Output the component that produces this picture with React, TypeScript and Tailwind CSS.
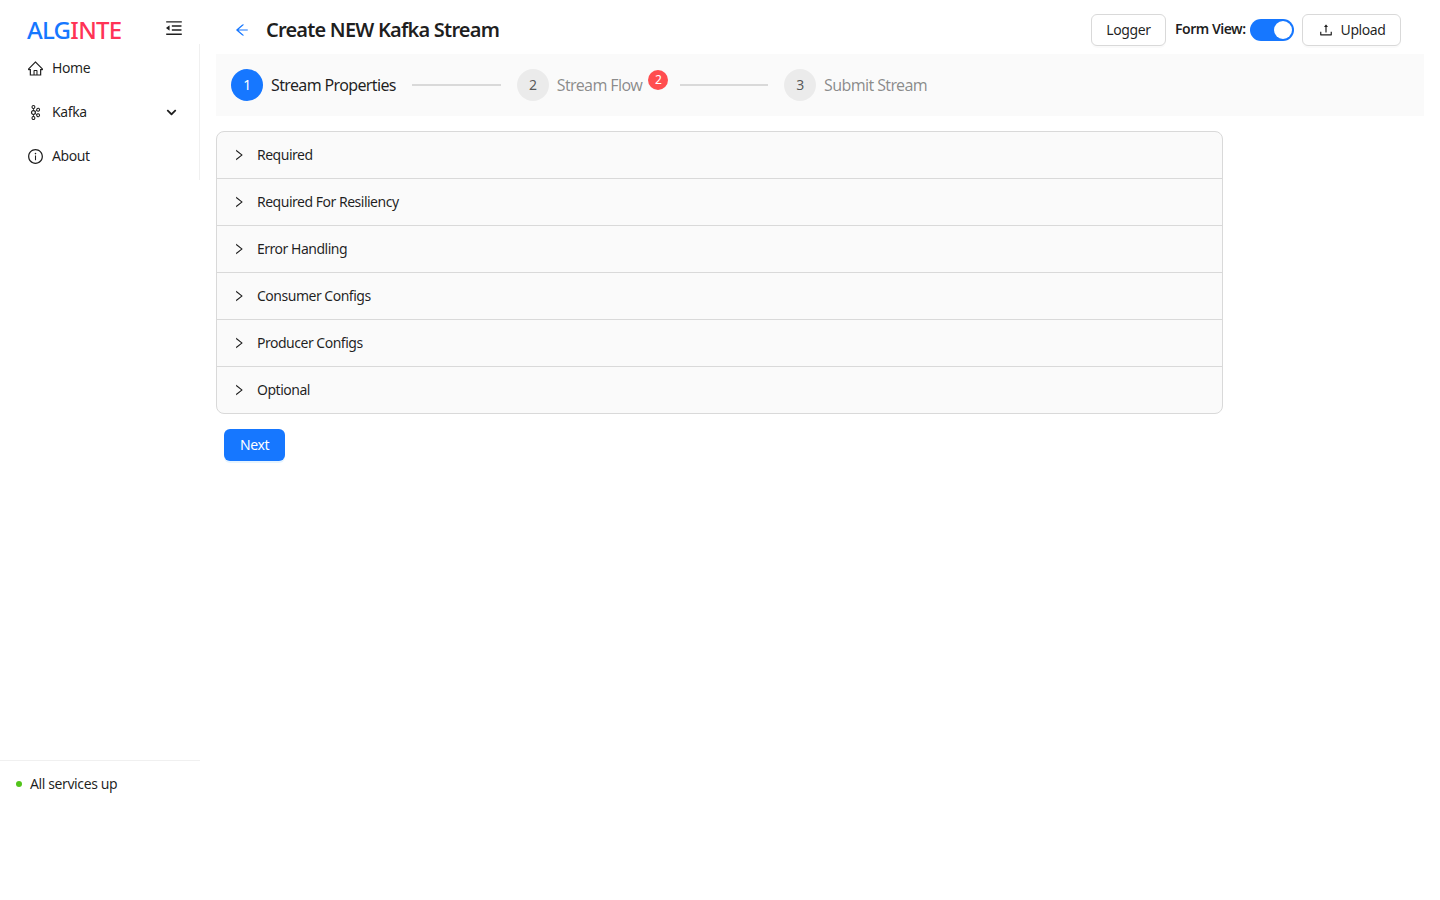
import React from "react";
import {
  AiOutlineArrowLeft,
  AiOutlineHome,
  AiOutlineInfoCircle,
  AiOutlineMenuFold,
  AiOutlineRight,
  AiOutlineUpload,
} from "react-icons/ai";
import { FaChevronDown } from "react-icons/fa";
import { SiApachekafka } from "react-icons/si";

const sections = [
  "Required",
  "Required For Resiliency",
  "Error Handling",
  "Consumer Configs",
  "Producer Configs",
  "Optional",
];

function MenuItem({ icon, label, arrow }: { icon: React.ReactNode; label: string; arrow?: boolean }) {
  return (
    <div className="my-1 flex h-10 items-center pl-[28px] pr-[22px] text-[14px] text-[#000000e0]">
      <span className="flex w-[14px] justify-center text-[17px] [&>svg]:shrink-0">{icon}</span>
      <span className="ml-[10px] flex-1 pb-[2px]">{label}</span>
      {arrow && <FaChevronDown className="text-[11px]" />}
    </div>
  );
}

function Step({ num, label, active, badge }: { num: number; label: string; active?: boolean; badge?: boolean }) {
  return (
    <div className="flex items-center">
      <div
        className={
          active
            ? "flex h-8 w-8 items-center justify-center rounded-full bg-[#1677ff] pb-px text-[14px] text-white"
            : "flex h-8 w-8 items-center justify-center rounded-full bg-[#0000000f] pb-px text-[14px] text-[#000000a6]"
        }
      >
        {num}
      </div>
      <span
        className={
          active
            ? "ml-2 text-[16px] tracking-[-0.04em] text-[#000000e0]"
            : "ml-2 text-[16px] tracking-[-0.04em] text-[#00000073]"
        }
      >
        {label}
      </span>
      {badge && (
        <span className="mb-[10px] ml-[6px] flex h-5 w-5 items-center justify-center rounded-full bg-[#ff4d4f] pb-px text-[12px] text-white">
          2
        </span>
      )}
    </div>
  );
}

export default function App() {
  return (
    <div className="flex h-screen bg-white font-['Noto_Sans','Open_Sans',sans-serif] tracking-[-0.025em]">
      {/* sidebar */}
      <aside className="flex w-[200px] shrink-0 flex-col pb-[92px]">
        <div className="flex h-11 items-center justify-between pl-[27px] pr-[16px] pt-4">
          <span className="text-[24px] font-medium leading-none tracking-[-0.03em]">
            <span className="text-[#1677ff]">ALG</span>
            <span className="text-[#ff3355]">INTE</span>
          </span>
          <AiOutlineMenuFold className="mb-1 text-[20px] text-[#000000e0]" />
        </div>
        <nav className="border-r border-[#0505050f]">
          <MenuItem icon={<AiOutlineHome />} label="Home" />
          <MenuItem icon={<SiApachekafka className="text-[15px]" />} label="Kafka" arrow />
          <MenuItem icon={<AiOutlineInfoCircle />} label="About" />
        </nav>
        <div className="flex-1" />
        <div className="flex h-12 items-center border-t border-[#0505050f] pl-4 text-[14px] text-[#000000e0]">
          <span className="mb-px h-1.5 w-1.5 rounded-full bg-[#52c41a]" />
          <span className="ml-2 pb-[2px]">All services up</span>
        </div>
      </aside>

      {/* main */}
      <main className="flex-1 pl-4 pr-4">
        <header className="flex h-[54px] items-center pt-[6px]">
          <AiOutlineArrowLeft className="ml-[18px] text-[16px] text-[#1677ff]" />
          <h1 className="ml-[16px] flex-1 pb-px text-[20px] font-semibold tracking-[-0.04em] text-[#000000e0]">
            Create NEW Kafka Stream
          </h1>
          <button className="h-8 w-[75px] rounded-md border border-[#d9d9d9] bg-white pb-px text-[14px] text-[#000000e0] shadow-[0_2px_0_rgba(0,0,0,0.02)]">
            Logger
          </button>
          <span className="mb-1 ml-[9px] w-[71px] whitespace-nowrap text-[14px] font-semibold tracking-[-0.035em] text-[#000000e0]">
            Form View:
          </span>
          <span className="ml-1 flex h-[22px] w-[44px] items-center justify-end rounded-full bg-[#1677ff] pr-0.5">
            <span className="h-[18px] w-[18px] rounded-full bg-white" />
          </span>
          <button className="mr-[23px] ml-[8px] flex h-8 w-[99px] items-center justify-center gap-[7px] rounded-md border border-[#d9d9d9] bg-white pb-px text-[14px] tracking-[-0.03em] text-[#000000e0] shadow-[0_2px_0_rgba(0,0,0,0.02)]">
            <AiOutlineUpload className="text-[16px]" />
            Upload
          </button>
        </header>

        <div className="flex h-[62px] items-center bg-[#fafafa] pl-[15px]">
          <Step num={1} label="Stream Properties" active />
          <div className="mx-4 h-0.5 w-[89px] bg-[#d9d9d9]" />
          <Step num={2} label="Stream Flow" badge />
          <div className="mx-3 h-0.5 w-[88px] bg-[#d9d9d9]" />
          <div className="ml-1">
            <Step num={3} label="Submit Stream" />
          </div>
        </div>

        <div className="mt-[15px] w-[1007px] overflow-hidden rounded-lg border border-[#d9d9d9] bg-[#fafafa]">
          {sections.map((s, i) => (
            <div
              key={s}
              className={
                i < sections.length - 1
                  ? "flex h-[47px] items-center border-b border-[#d9d9d9] pl-[15px] text-[14px] text-[#000000e0]"
                  : "flex h-[46px] items-center pl-[15px] text-[14px] text-[#000000e0]"
              }
            >
              <AiOutlineRight className="text-[14px]" />
              <span className="ml-[11px] pb-[2px] tracking-[-0.035em]">{s}</span>
            </div>
          ))}
        </div>

        <button className="mt-[15px] ml-2 h-8 w-[61px] rounded-md bg-[#1677ff] pb-px text-[14px] text-white shadow-[0_2px_0_rgba(5,145,255,0.1)]">
          Next
        </button>
      </main>
    </div>
  );
}
